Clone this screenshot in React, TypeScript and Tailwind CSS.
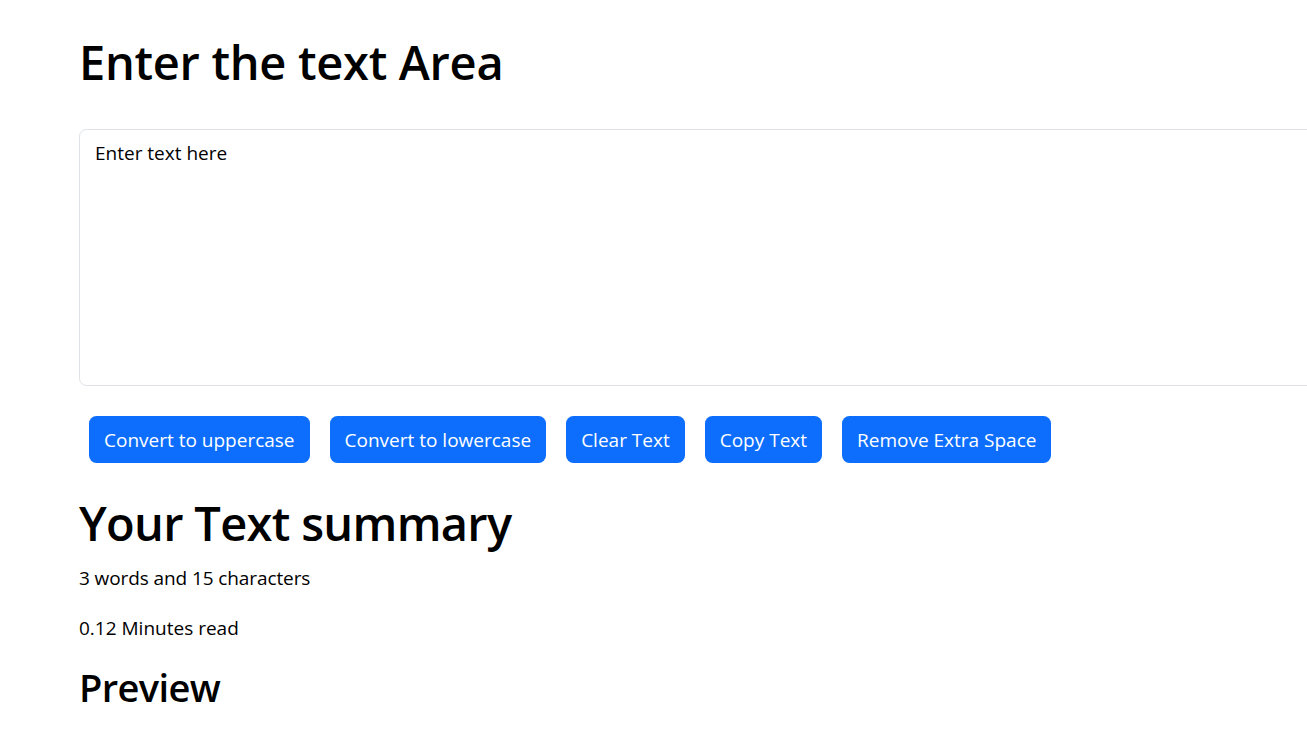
import { useState } from 'react'

export default function App() {
    const [text, setText] = useState('Enter text here')

    const words = text.split(/\s+/).filter((w) => w.length > 0).length

    return (
        <main
            className="min-h-screen w-full overflow-hidden bg-white text-black"
            style={{ fontFamily: '"Open Sans", "Noto Sans", "Liberation Sans", sans-serif' }}
        >
            <div className="pl-[79px] pt-[32px]">
                <h1 className="mb-[10px] text-[47px] font-semibold leading-[60px] tracking-[-0.3px]">Enter the text Area</h1>

                {/* Text area */}
                <textarea
                    value={text}
                    onChange={(e) => setText(e.target.value)}
                    rows={8}
                    className="mt-[37px] block h-[257px] w-[1300px] resize-none rounded-[7.5px] border border-[#dee2e6] bg-white px-[15px] py-[8px] text-[19px] leading-[30px] text-black focus:outline-none"
                />

                {/* Actions */}
                <div className="mt-[30px] flex gap-5 pl-[10px]">
                    {['Convert to uppercase', 'Convert to lowercase', 'Clear Text', 'Copy Text', 'Remove Extra Space'].map((label) => (
                        <button
                            key={label}
                            type="button"
                            className="h-[47px] rounded-[7.5px] bg-[#0d6efd] px-[15px] text-[19px] leading-[30px] text-white"
                        >
                            {label}
                        </button>
                    ))}
                </div>

                {/* Summary */}
                <h1 className="mt-[30px] mb-[10px] text-[47px] font-semibold leading-[60px] tracking-[-0.7px]">Your Text summary</h1>
                <p className="mb-[20px] text-[19px] leading-[30px] tracking-[-0.1px]">
                    {words} words and {text.length} characters
                </p>
                <p className="mb-[20px] text-[19px] leading-[30px]">{(0.008 * 15).toFixed(2)} Minutes read</p>
                <h2 className="text-[38px] font-semibold leading-[48px] tracking-[-0.6px]">Preview</h2>
            </div>
        </main>
    )
}
